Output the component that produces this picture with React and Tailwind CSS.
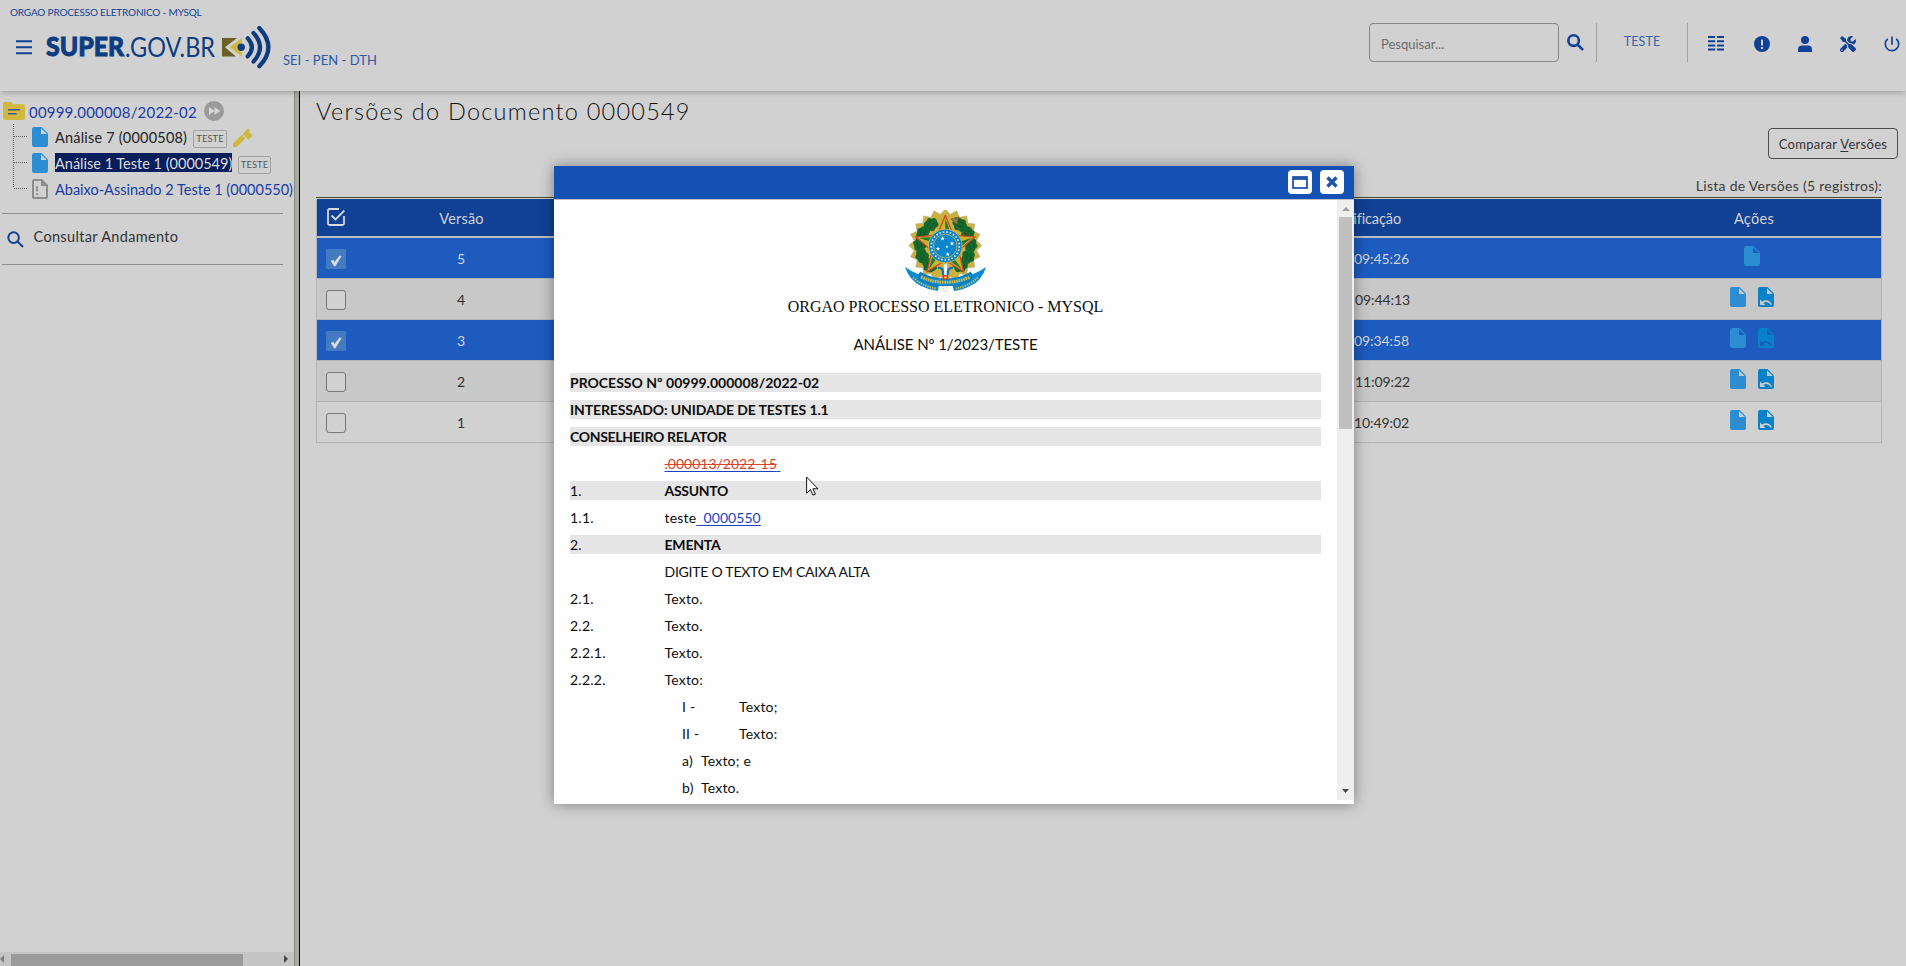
import React from 'react';
import { FaTools } from 'react-icons/fa';
import { MdPowerSettingsNew } from 'react-icons/md';

const lato = "font-['Lato',sans-serif]";

function Lens({ className, width }) {
  return (
    <svg className={className} viewBox="0 0 17 17" fill="none" stroke="currentColor" strokeWidth={width}>
      <circle cx="6.6" cy="6.6" r="5.3" />
      <path d="M10.4 10.4 L16 16" />
    </svg>
  );
}

function FileIcon({ className, cut = '#d1d1d1', fill = '#2d8dd3' }) {
  return (
    <svg className={className} viewBox="0 0 16 20">
      <path d="M2 0H9.5L16 6.5V18a2 2 0 0 1-2 2H2a2 2 0 0 1-2-2V2a2 2 0 0 1 2-2Z" fill={fill} />
      <path d="M9 1.2V7h5.8Z" fill={cut} />
    </svg>
  );
}

function UndoFileIcon({ cut }) {
  return (
    <svg className="h-5 w-4" viewBox="0 0 16 20">
      <path d="M2 0H9.5L16 6.5V18a2 2 0 0 1-2 2H2a2 2 0 0 1-2-2V2a2 2 0 0 1 2-2Z" fill="#0782c8" />
      <path d="M9 1.2V7h5.8Z" fill={cut} />
      <path d="M2 12.5V18H7.4L5.4 16C7.6 14.4 11 14.9 12.7 18L14 17.4C12.2 12.9 7.4 12 4.1 14.6Z" fill={cut} />
    </svg>
  );
}

function Logo() {
  return (
    <svg className="h-[46px] w-[226px]" viewBox="0 0 226 46">
      <text x="0" y="32.3" textLength="78" lengthAdjust="spacingAndGlyphs" className="font-['Lato',sans-serif] text-[26.5px] font-black" fill="#0d3c80" stroke="#0d3c80" strokeWidth="0.9">SUPER</text>
      <text x="79" y="32.5" textLength="90" lengthAdjust="spacingAndGlyphs" className="font-['Lato',sans-serif] text-[27px]" fill="#0d3c80">.GOV.BR</text>
      <path d="M176 14H191L179 23.2L190 32.5H176Z" fill="#6d6027" />
      <path d="M196 14L183.5 23.2L196 32.5V28.5A6 6 0 0 1 196 18Z" fill="#d2b73b" />
      <circle cx="195.2" cy="23.3" r="3.7" fill="#0d3c80" />
      <g fill="none" stroke="#0d3c80" strokeWidth="4.2" strokeLinecap="round">
        <path d="M201.7 14.2Q210 23.3 201.7 32.4" />
        <path d="M207.5 9Q220.5 23.3 207.5 37.6" />
        <path d="M213.3 4Q231.5 23.3 213.3 42.3" />
      </g>
    </svg>
  );
}

function starPoints(cx, cy, outer, inner, n) {
  return Array.from({ length: n * 2 }, (_, i) => {
    const r = i % 2 ? inner : outer;
    const a = (Math.PI * i) / n - Math.PI / 2;
    return `${(cx + r * Math.cos(a)).toFixed(1)},${(cy + r * Math.sin(a)).toFixed(1)}`;
  }).join(' ');
}

function CoatOfArms() {
  const leaves = [35, 62, 88, 115, 142, 218, 245, 272, 298, 325];
  return (
    <svg className="h-[82px] w-[81px]" viewBox="0 0 81 82">
      <polygon points={starPoints(40.3, 35.5, 36.5, 31.5, 20)} fill="#cdb13c" stroke="#a9a48a" strokeWidth="0.6" />
      {leaves.map((a) => (
        <g key={a} transform={`rotate(${a} 40.3 35.5) translate(40.3 9.5)`}>
          <path d="M-7 0Q-6 -6 -1 -5Q2 -8 4 -4Q9 -3 7 2Q8 7 2 6Q-2 9 -4 5Q-9 4 -7 0Z" fill="#136a2c" />
          <path d="M-3 -1L3 -3M-3 3L4 1" stroke="#0c4a24" strokeWidth="0.7" />
          <circle cx="-1" cy="4" r="0.8" fill="#b32a23" />
        </g>
      ))}
      <path d="M46 9L54 7L52 15ZM50 7L56 13" fill="#8a7d4a" stroke="#4a4630" strokeWidth="0.5" />
      <polygon points={starPoints(40.3, 36.5, 31, 14, 5)} fill="#ccb527" stroke="#d4472a" strokeWidth="1.3" />
      {[0, 72, 144, 216, 288].map((a) => (
        <path key={a} d="M40.3 8.5V22H45.2Z" fill="#1d7a34" transform={`rotate(${a} 40.3 36.5)`} />
      ))}
      <circle cx="40.3" cy="36" r="16.8" fill="#0b80c4" stroke="#d8c34a" strokeWidth="0.8" />
      <circle cx="40.3" cy="36" r="14" fill="none" stroke="#eef6fa" strokeWidth="1.7" strokeDasharray="1.6 1.9" />
      <circle cx="40.3" cy="36" r="11.8" fill="#0a86d0" stroke="#d8c34a" strokeWidth="0.8" />
      <g fill="#fff">
        <polygon points={starPoints(37.5, 28.5, 2.3, 1, 5)} />
        <polygon points={starPoints(47, 33.5, 2.3, 1, 5)} />
        <polygon points={starPoints(33, 38.8, 2.1, 1, 5)} />
        <polygon points={starPoints(42, 36.8, 1.5, 0.7, 5)} />
        <polygon points={starPoints(42.8, 44.3, 2.1, 1, 5)} />
      </g>
      <path d="M38.8 54H42.2V66H38.8Z" fill="#fff" stroke="#a8a8a8" strokeWidth="0.6" />
      <path d="M33 58Q39 57 38 65M48 58Q42 57 43 65" fill="none" stroke="#1574b8" strokeWidth="2.4" />
      <path d="M0 57Q7 62 14 64.5L15 61.5Q28 69 40.3 69Q53 69 66 61.5L67 64.5Q74 62 81 57Q77 71 65 76Q58 80 49 81L47 74H34L33 81Q24 80 16 76Q4 70 0 57Z" fill="#0c8bd2" />
      <path d="M14 63.5Q27 69 40.3 69Q54 69 67 63.5L66 70Q54 76 40.3 76Q27 76 14 70Z" fill="#0c8bd2" stroke="#0a5a8e" strokeWidth="0.5" />
      <path d="M16 67Q28 72.3 40.3 72.3Q53 72.3 65 67" fill="none" stroke="#d2b93a" strokeWidth="3" strokeDasharray="1.7 0.7" />
      <path d="M8 67.5Q18 76.5 31 78.5M73 67.5Q63 76.5 51 78.5" fill="none" stroke="#cdb53a" strokeWidth="2" strokeDasharray="1.5 0.9" />
      <rect x="37.6" y="65" width="5.6" height="4.6" fill="#d63c24" />
      <circle cx="40.4" cy="67.3" r="1.3" fill="#e6c63a" />
      <path d="M38.6 76H42L41.6 81.5H39Z" fill="#fff" stroke="#a8a8a8" strokeWidth="0.6" strokeDasharray="1 1" />
    </svg>
  );
}

function Header() {
  return (
    <header className="relative z-10 flex h-[91px] shrink-0 justify-between bg-[#d1d1d1] text-[#114195] shadow-[0_1px_6px_rgba(0,0,0,0.28)]">
      <div className="flex flex-col">
        <div className="ml-2.5 h-6 pt-1 text-[10px] leading-4 tracking-[-0.17px]">ORGAO PROCESSO ELETRONICO - MYSQL</div>
        <div className="flex h-[46px]">
          <svg className="mt-4 ml-4 h-[15px] w-4" viewBox="0 0 16 15" stroke="#114195" strokeWidth="2">
            <path d="M0 1.3H16M0 7.3H16M0 13.3H16" />
          </svg>
          <div className="ml-[14px]"><Logo /></div>
          <div className="ml-[11px] pt-[26px] text-[13px] leading-5 tracking-[0.03px] text-[#2f58a4]">SEI - PEN - DTH</div>
        </div>
      </div>
      <div className="flex pt-[23px] pr-1">
        <div className="h-[39px] w-[190px] rounded border border-[#868686] pl-[11px] text-[13px] leading-[40px] text-[#6c6c6c]">Pesquisar...</div>
        <Lens className="mt-[11px] ml-2 h-[17px] w-[17px]" width="2.6" />
        <div className="ml-3 flex h-[39px] w-[92px] justify-center border-x border-[#a4a4a4] text-[12.5px] leading-[37px] tracking-[0.1px] text-[#3c62a8]">TESTE</div>
        <svg className="mt-[13px] ml-5 h-[15px] w-4" viewBox="0 0 16 15" stroke="#114195" strokeWidth="2">
          <path d="M0 1H7.2M9 1H16M0 5.2H7.2M9 5.2H16M0 9.4H7.2M9 9.4H16M0 13.6H7.2M9 13.6H16" />
        </svg>
        <svg className="mt-[13px] ml-[30px] h-4 w-4" viewBox="0 0 16 16">
          <circle cx="8" cy="8" r="8" fill="#114195" />
          <rect x="7" y="3.6" width="2" height="6" rx="0.5" fill="#d1d1d1" />
          <circle cx="8" cy="12" r="1.2" fill="#d1d1d1" />
        </svg>
        <svg className="mt-[13px] ml-7 h-4 w-[14px]" viewBox="0 0 14 16" fill="#114195">
          <circle cx="7" cy="4" r="4" />
          <path d="M4 9.6H10A4 4 0 0 1 14 13.6V16H0V13.6A4 4 0 0 1 4 9.6Z" />
        </svg>
        <FaTools className="mt-[13px] ml-7 h-4 w-4" />
        <MdPowerSettingsNew className="mt-[11px] ml-[26px] h-5 w-5" />
      </div>
    </header>
  );
}

function Badge({ className }) {
  return (
    <span className={`flex h-[18px] shrink-0 items-center justify-center rounded-[2px] border border-[#a2a2a2] pt-px text-[9.5px] text-[#555] ${className}`}>TESTE</span>
  );
}

function Sidebar() {
  return (
    <aside className="flex w-[294px] shrink-0 flex-col overflow-hidden text-[14.5px] text-[#222]">
      <div className="flex h-[33px] pt-2.5 pl-[3px]">
        <svg className="mt-px h-[18px] w-[22px]" viewBox="0 0 22 18">
          <path d="M2 0H8L10.5 2.2H20a2 2 0 0 1 2 2V16a2 2 0 0 1-2 2H2a2 2 0 0 1-2-2V2a2 2 0 0 1 2-2Z" fill="#d0b73d" />
          <path d="M5 7.8H17M5 11.8H13.5" stroke="#3c59a0" strokeWidth="1.6" />
        </svg>
        <span className="ml-[4px] text-[15px] leading-[23px] tracking-[0.2px] text-[#1a3ca8]">00999.000008/2022-02</span>
        <svg className="ml-[7px] h-5 w-5" viewBox="0 0 20 20">
          <circle cx="10" cy="10" r="10" fill="#9b9b9b" />
          <path d="M5 6L10.5 10L5 14ZM10.5 6L16 10L10.5 14Z" fill="#d8d8d8" />
        </svg>
      </div>
      <div className="flex h-[78px]">
        <svg className="h-[66px] w-8 shrink-0" viewBox="0 0 32 66" fill="none" stroke="#606060" strokeDasharray="1 1">
          <path d="M13.5 0V64M14 12.5H28M14 38.5H28M14 64.5H28" />
        </svg>
        <div className="flex flex-col">
          <div className="flex h-[26px]">
            <FileIcon className="mt-[3px] h-5 w-4" />
            <span className="mt-1 ml-[7px] w-[132px] shrink-0 leading-[19px] tracking-[0.2px] whitespace-nowrap">Análise 7 (0000508)</span>
            <Badge className="mt-1.5 ml-1.5 w-[34px]" />
            <svg className="mt-1 ml-[6px] h-[19px] w-[19px]" viewBox="0 0 19 19" fill="#d0b73d">
              <path d="M0 19V15.5L8.8 6.8L12.3 10.2L3.6 19ZM9.6 6L13.2 2.2L15 .5L17 2.3L15.8 4L18.8 6.5L18.5 8.6L15.6 11.6L14.4 10.4L13 9.6Z" />
            </svg>
          </div>
          <div className="flex h-[26px]">
            <FileIcon className="mt-[3px] h-5 w-4" />
            <span className="mt-[3px] ml-[7px] h-[19px] w-[177px] bg-[#081f5c] leading-[21px] whitespace-nowrap text-[#dcdcdc]">Análise 1 Teste 1 (0000549)</span>
            <Badge className="mt-1.5 ml-1.5 w-[33px]" />
          </div>
          <div className="flex h-[26px]">
            <svg className="mt-[3px] h-5 w-4 shrink-0" viewBox="0 0 16 20">
              <path d="M2 1H9.5L15 6.5V18a1 1 0 0 1-1 1H2a1 1 0 0 1-1-1V2a1 1 0 0 1 1-1Z" fill="none" stroke="#8d8d8d" strokeWidth="2" />
              <path d="M9 1V7H15Z" fill="#8d8d8d" />
              <path d="M5 7V12.5M5 14.2V16" stroke="#8d8d8d" strokeWidth="1.8" />
            </svg>
            <span className="mt-1 ml-[7px] leading-[19px] whitespace-nowrap text-[#1a3ca8]">Abaixo-Assinado 2 Teste 1 (0000550)</span>
          </div>
        </div>
      </div>
      <div className="mt-[11px] ml-0.5 flex h-[52px] w-[281px] border-y border-[#8e8e8e]">
        <Lens className="mt-[17px] ml-[5px] h-[17px] w-[17px] text-[#114195]" width="2" />
        <span className="ml-[9.5px] pt-[13px] leading-[19px] tracking-[0.34px] text-[#333]">Consultar Andamento</span>
      </div>
      <div className="mt-auto flex h-[14px] items-center bg-[#c5c5c5]">
        <svg className="h-2 w-[11px]" viewBox="0 0 11 8"><path d="M4 0V8L0 4Z" fill="#7d7d7d" /></svg>
        <div className="mt-0.5 h-3 w-[232px] bg-[#9b9b9b]" />
        <svg className="ml-auto mr-1.5 h-2 w-1" viewBox="0 0 4 8"><path d="M0 0V8L4 4Z" fill="#444" /></svg>
      </div>
    </aside>
  );
}

const versions = [
  { n: 5, time: '09:45:26', checked: true, undo: false, bg: 'bg-[#1d5bbf]', pad: '' },
  { n: 4, time: '09:44:13', checked: false, undo: true, bg: 'bg-[#c8c8c8]', pad: 'pl-px' },
  { n: 3, time: '09:34:58', checked: true, undo: true, bg: 'bg-[#1d5bbf]', pad: '' },
  { n: 2, time: '11:09:22', checked: false, undo: true, bg: 'bg-[#c8c8c8]', pad: 'pl-px' },
  { n: 1, time: '10:49:02', checked: false, undo: true, bg: 'bg-[#d1d1d1]', pad: '' },
];

const columns = 'grid grid-cols-[40px_209px_788px_281px_246px]';

function VersionRow({ v }) {
  const cut = v.checked ? '#1d5bbf' : v.n === 1 ? '#d1d1d1' : '#c8c8c8';
  return (
    <div className={`${columns} h-[41px] items-center border-b border-[#b2b4ba] text-[14px] ${v.bg} ${v.checked ? 'text-[#d3d3d3]' : 'text-[#333]'}`}>
      <div className="mt-0.5 pl-[9px]">
        {v.checked ? (
          <svg className="h-5 w-5" viewBox="0 0 20 20">
            <rect width="20" height="20" rx="2" fill="#447abf" />
            <path d="M4.8 12L7.2 10.8L8.5 13L13.6 6.4L15.6 7L9.4 17.2H8.2Z" fill="#dcdcdc" />
          </svg>
        ) : (
          <div className="h-5 w-5 rounded-[3px] border border-[#777] bg-[#d1d1d1]" />
        )}
      </div>
      <div className="pr-px text-center">{v.n}</div>
      <div />
      <div className={`text-[14px] tracking-[-0.1px] ${v.pad}`}>{v.time}</div>
      <div className="mt-[-4px] flex justify-center gap-3 pr-[12px]">
        <FileIcon className="h-5 w-4" cut={cut} />
        {v.undo && <UndoFileIcon cut={cut} />}
      </div>
    </div>
  );
}

function Main() {
  return (
    <main className="flex grow flex-col pl-4 text-[#333]">
      <div className="flex h-[37px]">
        <h1 className="pt-1.5 text-[23.5px] leading-[28px] font-light tracking-[1.24px] text-[#111]">Versões do Documento 0000549</h1>
      </div>
      <div className="flex h-[31px] justify-end pr-2">
        <button className="h-[31px] w-[130px] rounded border border-[#4c4c4c] text-[13px] leading-[31px] tracking-[0.3px]">
          Comparar <span className="underline underline-offset-2">V</span>ersões
        </button>
      </div>
      <div className="flex h-[38px] justify-end pt-[17px] pr-6 text-[14px] leading-[20px] tracking-[0.28px] text-[#3b3b3b]">Lista de Versões (5 registros):</div>
      <div className="w-[1566px] border-t border-[#474d12] pt-px">
        <div className="border-x border-[#b2b4ba]">
          <div className={`${columns} h-[37px] items-center bg-[#114195] text-[14.5px] text-[#d3d3d3]`}>
            <svg className="-mt-0.5 ml-[10px] h-[18px] w-[18px]" viewBox="0 0 18 18" fill="none" stroke="#d8d8d8" strokeWidth="1.8">
              <path d="M12 1H2.5A1.5 1.5 0 0 0 1 2.5V15.5A1.5 1.5 0 0 0 2.5 17H15.5A1.5 1.5 0 0 0 17 15.5V8" />
              <path d="M4.5 7.5L8.5 11.5L17.3 2.7" />
            </svg>
            <div className="pt-0.5 text-center tracking-[0.2px]">Versão</div>
            <div />
            <div className="flex w-[47px] justify-end pt-0.5 tracking-[-0.1px]">Modificação</div>
            <div className="pt-0.5 pr-[14px] pl-[6px] text-center tracking-[0.3px]">Ações</div>
          </div>
          <div className="h-[2px] bg-[#bcbec3]" />
          {versions.map((v) => <VersionRow key={v.n} v={v} />)}
        </div>
      </div>
    </main>
  );
}

function Bar({ num, children }) {
  return (
    <div className="mb-2 flex h-[19px] bg-[#e5e5e5] leading-[19px]">
      {num && <span className="w-[94.5px] tracking-[0.25px]">{num}</span>}
      <b>{children}</b>
    </div>
  );
}

function Line({ num, children }) {
  return (
    <div className="mb-2 flex h-[19px] leading-[19px]">
      <span className="w-[94.5px] shrink-0 tracking-[0.25px]">{num}</span>
      <span className="whitespace-pre">{children}</span>
    </div>
  );
}

function Modal() {
  return (
    <div className="absolute top-[166px] left-[554px] z-20 flex h-[638px] w-[800px] flex-col bg-[#fefefe] shadow-[0_0_14px_rgba(0,0,0,0.4)]">
      <div className="flex h-[33px] shrink-0 justify-end gap-2 bg-[#1351b4] pt-1 pr-2.5">
        <div className="flex h-6 w-6 items-center justify-center rounded bg-white">
          <svg className="h-[13px] w-4" viewBox="0 0 16 13" fill="none" stroke="#1f56ab">
            <rect x="1" y="1" width="14" height="11" strokeWidth="1.8" />
            <path d="M1 2.4H15" strokeWidth="3" />
          </svg>
        </div>
        <div className="flex h-6 w-6 items-center justify-center rounded bg-white">
          <svg className="h-3 w-3" viewBox="0 0 12 12" stroke="#1f56ab" strokeWidth="3.4"><path d="M1.5 1.5L10.5 10.5M10.5 1.5L1.5 10.5" /></svg>
        </div>
      </div>
      <div className="flex h-[601px] border-t border-[#bfc0c6]">
        <div className="w-[783px] overflow-hidden pr-4 pl-4 text-[14px] text-[#0e0e0e]">
          <div className="flex flex-col items-center">
            <div className="mt-[10px]"><CoatOfArms /></div>
            <div className="mt-[5px] font-['Liberation_Serif',serif] text-[16px] leading-[20px]">ORGAO PROCESSO ELETRONICO - MYSQL</div>
            <div className="mt-[18px] h-[38px] text-[15px] leading-[18px] tracking-[-0.08px]">ANÁLISE Nº 1/2023/TESTE</div>
          </div>
          <Bar>PROCESSO Nº 00999.000008/2022-02</Bar>
          <Bar><span className="tracking-[-0.12px]">INTERESSADO: UNIDADE DE TESTES 1.1</span></Bar>
          <Bar><span className="tracking-[-0.3px]">CONSELHEIRO RELATOR</span></Bar>
          <Line><span className="text-[#1a44c4] underline underline-offset-2"><span className="text-[#d8452a] line-through">.000013/2022-15</span> </span></Line>
          <Bar num="1."><span className="tracking-[-0.3px]">ASSUNTO</span></Bar>
          <Line num="1.1."><span className="tracking-[0.2px]">teste</span><span className="tracking-[0.05px] text-[#1a44c4] underline underline-offset-2">{'  0000550'}</span></Line>
          <Bar num="2."><span className="tracking-[-0.2px]">EMENTA</span></Bar>
          <Line><span className="tracking-[-0.24px]">DIGITE O TEXTO EM CAIXA ALTA</span></Line>
          <Line num="2.1."><span className="tracking-[0.2px]">Texto.</span></Line>
          <Line num="2.2."><span className="tracking-[0.2px]">Texto.</span></Line>
          <Line num="2.2.1."><span className="tracking-[0.2px]">Texto.</span></Line>
          <Line num="2.2.2."><span className="tracking-[0.2px]">Texto:</span></Line>
          <div className="pl-[112px] tracking-[0.2px]">
            <div className="mb-2 flex h-[19px] leading-[19px]"><span className="w-[57px]">I -</span>Texto;</div>
            <div className="mb-2 flex h-[19px] leading-[19px]"><span className="w-[57px]">II -</span>Texto:</div>
            <div className="mb-2 flex h-[19px] leading-[19px]"><span className="w-[19px]">a)</span>Texto; e</div>
            <div className="flex h-[19px] leading-[19px]"><span className="w-[19px]">b)</span>Texto.</div>
          </div>
        </div>
        <div className="flex w-[17px] flex-col items-center bg-[#efefef] py-[7px]">
          <svg className="h-1 w-2" viewBox="0 0 8 4"><path d="M0 4H8L4 0Z" fill="#a0a0a0" /></svg>
          <div className="mt-1.5 h-[212px] w-[13px] bg-[#c0c0c0]" />
          <svg className="mt-auto h-1 w-[7px]" viewBox="0 0 7 4"><path d="M0 0H7L3.5 4Z" fill="#444" /></svg>
        </div>
      </div>
    </div>
  );
}

export default function App() {
  return (
    <div className={`${lato} relative flex h-[966px] w-[1906px] flex-col overflow-hidden bg-[#d1d1d1]`}>
      <Header />
      <div className="flex grow">
        <Sidebar />
        <div className="w-1.5 shrink-0 border-r border-l border-r-black border-l-[#8b8b85] bg-[#a9aaa4]" />
        <Main />
      </div>
      <Modal />
      <svg className="absolute top-[476px] left-[806px] z-30 h-[20px] w-[13px]" viewBox="0 0 13 20">
        <path d="M.6 1V17.2L4.4 13.6L7 19.2L9.4 18.1L6.9 12.8H12Z" fill="#fff" stroke="#111" strokeWidth="1" />
      </svg>
    </div>
  );
}
